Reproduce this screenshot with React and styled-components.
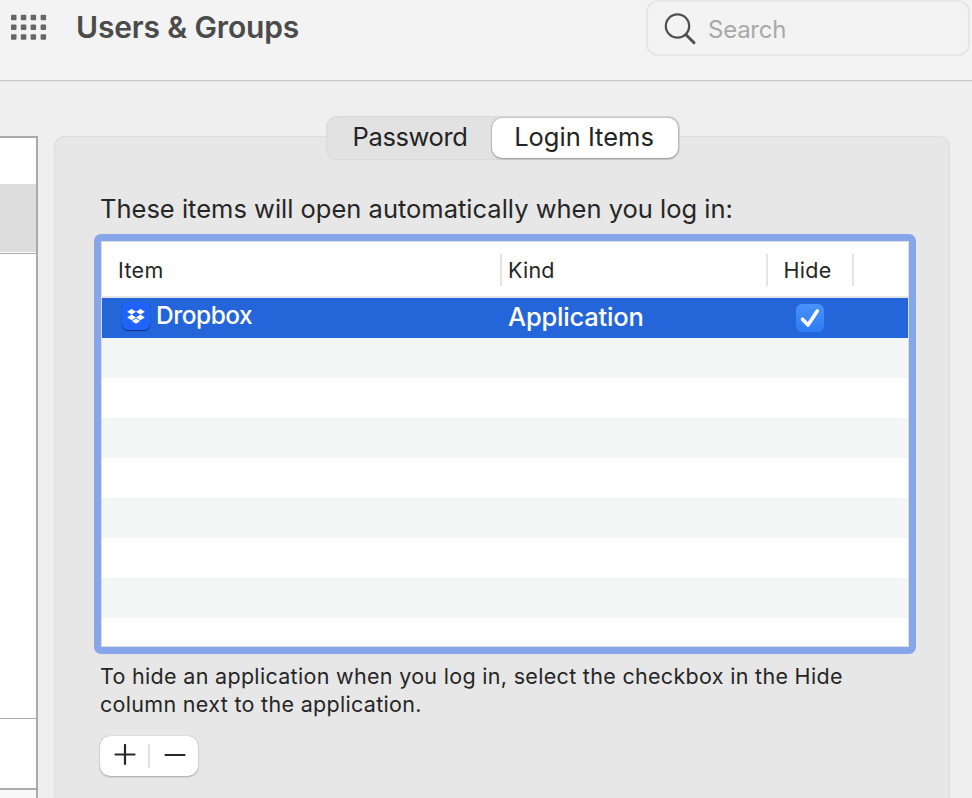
import React from "react";
import styled, { createGlobalStyle } from "styled-components";

const Global = createGlobalStyle`
  *, *::before, *::after { box-sizing: border-box; }
  body { margin: 0; overflow: hidden; background: #efefef; }
  svg { display: block; flex: none; }
`;

const Window = styled.div`
  width: 972px;
  height: 798px;
  display: flex;
  flex-direction: column;
  overflow: hidden;
  background: #efefef;
  font-family: Inter, "Liberation Sans", sans-serif;
  color: #262626;
`;

const Toolbar = styled.header`
  height: 82px;
  flex: none;
  display: flex;
  align-items: flex-start;
  padding: 0 2px 0 10px;
  background: #f3f3f3;
  border-bottom: 1px solid #e3e3e3;
  box-shadow: inset 0 -1px #c9c9c9;
`;

const Text = styled.span`
  display: block;
  white-space: nowrap;
  font-size: ${(p) => p.$size}px;
  line-height: ${(p) => p.$line}px;
  letter-spacing: ${(p) => p.$track || 0}px;
  font-weight: ${(p) => p.$weight || 400};
`;

const GridIcon = styled.svg`
  margin-top: 14px;
`;

const Title = styled.h1`
  margin: 8px auto 0 28px;
  font-size: 30px;
  line-height: 39px;
  font-weight: 600;
  letter-spacing: -0.15px;
  color: #4b4b4b;
  white-space: nowrap;
`;

const SearchField = styled.div`
  width: 324px;
  height: 56px;
  display: flex;
  align-items: center;
  gap: 11px;
  padding: 2px 0 0 16px;
  border: 2px solid #e6e6e6;
  border-radius: 12px;
  color: #a9a9a9;
`;

const SearchHint = styled.div`
  padding-top: 2px;
`;

const Content = styled.div`
  flex: 1;
  min-height: 0;
  display: flex;
  gap: 16px;
  padding-top: 54px;
`;

const Sidebar = styled.aside`
  width: 38px;
  flex: none;
  display: flex;
  flex-direction: column;
  border-top: 2px solid #ababab;
  border-right: 2px solid #ababab;
  background: #fff;
`;

const SidebarRow = styled.div`
  height: ${(p) => p.$height}px;
  flex: none;
  background: ${(p) => p.$fill || "#fff"};
  border-bottom: ${(p) => p.$rule || 0}px solid #ababab;
`;

const Panel = styled.main`
  width: 896px;
  display: flex;
  flex-direction: column;
  align-items: flex-start;
  padding: 0 33px 0 39px;
  background: #e7e7e7;
  border: 1px solid #dcdcdc;
  border-bottom: 0;
  border-radius: 11px 11px 0 0;
`;

const Tabs = styled.div`
  display: flex;
  width: 354px;
  height: 44px;
  flex: none;
  margin: -21px 0 0 232px;
  padding: 1px;
  border: 1px solid #d9d9d9;
  border-radius: 11px;
  background: #e2e2e2;
`;

const Tab = styled.button`
  width: ${(p) => p.$width}px;
  height: 40px;
  padding: 0 ${(p) => (p.$active ? 2 : 0)}px 2px 0;
  border: 0;
  border-radius: 10px;
  display: flex;
  align-items: center;
  justify-content: center;
  font-family: inherit;
  color: #242424;
  background: ${(p) => (p.$active ? "#fff" : "transparent")};
  box-shadow: ${(p) => (p.$active ? "0 0 1px 1px rgba(0,0,0,.13), 0 1px 2px rgba(0,0,0,.25)" : "none")};
`;

const Caption = styled.div`
  margin: 31px 0 7px 6px;
`;

const TableFrame = styled.div`
  width: 822px;
  height: 420px;
  flex: none;
  border: 7px solid #87a6e9;
  border-radius: 7px;
  background: #fff;
`;

const Table = styled.div`
  height: 406px;
  overflow: hidden;
  border: 1px solid #d9dde2;
  background: #fff;
`;

const Row = styled.div`
  display: grid;
  grid-template-columns: 400px 266px 86px 1fr;
  height: ${(p) => (p.$header ? 56 : 40)}px;
  border-bottom: ${(p) => (p.$header ? "2px solid #e4e6e5" : "0")};
  background: ${(p) => p.$fill || "#fff"};
  color: ${(p) => (p.$selected ? "#fff" : "inherit")};
`;

const HeaderCell = styled.div`
  height: 32px;
  margin-top: 12px;
  padding-left: ${(p) => p.$pad}px;
  border-right: ${(p) => (p.$last ? 0 : 2)}px solid #e3e3e3;
`;

const Cell = styled.div`
  display: flex;
  align-items: flex-start;
  padding: ${(p) => p.$top || 0}px 0 0 ${(p) => p.$pad || 0}px;
`;

const AppIcon = styled.div`
  width: 28px;
  height: 28px;
  margin: 4px 6px 0 0;
  display: flex;
  align-items: center;
  justify-content: center;
  border-radius: 6px;
  background: #1f63fa;
  box-shadow: 0 1px 1px rgba(0, 20, 80, 0.65);
`;

const Check = styled.div`
  width: 28px;
  height: 28px;
  border-radius: 6px;
  background: linear-gradient(#4792fa, #2f7bf6);
`;

const Help = styled.div`
  margin: 8px 0 0 6px;
`;

const ButtonPair = styled.div`
  display: flex;
  align-items: center;
  width: 98px;
  height: 40px;
  flex: none;
  margin: 18px 0 0 6px;
  border-radius: 10px;
  background: #fff;
  box-shadow: 0 0 1px rgba(0, 0, 0, 0.3), 0 1px 2px rgba(0, 0, 0, 0.25);
`;

const IconButton = styled.button`
  flex: 1;
  height: 40px;
  padding: 0 0 2px 1px;
  border: 0;
  background: none;
  display: flex;
  align-items: center;
  justify-content: center;
`;

const ButtonRule = styled.div`
  width: 2px;
  height: 24px;
  background: #e0e0e0;
`;

const stripes = ["#f4f5f5", "#fff", "#f4f5f5", "#fff", "#f4f5f5", "#fff", "#f4f5f5", "#fff"];

export default function App() {
  return (
    <>
      <Global />
      <Window>
        <Toolbar>
          <GridIcon width="38" height="28" fill="#666">
            {[1, 10.8, 20.6, 30.6].map((x) =>
              [0.8, 10.5, 20.2].map((y) => (
                <rect key={`${x}-${y}`} x={x} y={y} width="5.5" height="5.5" rx="1" />
              ))
            )}
          </GridIcon>
          <Title>Users &amp; Groups</Title>
          <SearchField>
            <svg width="33" height="33" fill="none" stroke="#505050">
              <circle cx="13.5" cy="13" r="11.7" strokeWidth="2.2" />
              <path d="M22 21.7 30 29.7" strokeWidth="3" strokeLinecap="round" />
            </svg>
            <SearchHint>
              <Text $size={24} $line={32} $track={-0.25}>Search</Text>
            </SearchHint>
          </SearchField>
        </Toolbar>
        <Content>
          <Sidebar>
            <SidebarRow $height={46} />
            <SidebarRow $height={68} $fill="#dcdcdc" />
            <SidebarRow $height={2} $rule={1} />
            <SidebarRow $height={465} $rule={1} />
            <SidebarRow $height={71} $rule={2} />
            <SidebarRow $height={8} $fill="#f8f8f8" />
          </Sidebar>
          <Panel>
            <Tabs>
              <Tab $width={164}><Text $size={25.5} $line={32} $track={-0.4}>Password</Text></Tab>
              <Tab $width={186} $active><Text $size={25.5} $line={32}>Login Items</Text></Tab>
            </Tabs>
            <Caption>
              <Text $size={25.5} $line={36}>These items will open automatically when you log in:</Text>
            </Caption>
            <TableFrame>
              <Table>
                <Row $header>
                  <HeaderCell $pad={16}><Text $size={21.5} $line={32} $track={0.35}>Item</Text></HeaderCell>
                  <HeaderCell $pad={6}><Text $size={21.5} $line={32} $track={0.2}>Kind</Text></HeaderCell>
                  <HeaderCell $pad={15.5}><Text $size={21.5} $line={32} $track={0.3}>Hide</Text></HeaderCell>
                  <HeaderCell $last />
                </Row>
                <Row $selected $fill="#2465d9">
                  <Cell $pad={20}>
                    <AppIcon>
                      <svg width="18" height="16" viewBox="0 0 18 16" fill="#fff">
                        <path d="M4.6 1 9 3.8 4.6 6.6.2 3.8ZM13.4 1l4.4 2.8-4.4 2.8L9 3.8ZM4.6 6.6 9 9.4l-4.4 2.8L.2 9.4ZM13.4 6.6l4.4 2.8-4.4 2.8L9 9.4ZM9 10.4l4.2 2.6L9 15.7 4.8 13Z" />
                      </svg>
                    </AppIcon>
                    <Text $size={24.5} $line={34} $weight={500} $track={-0.5}>Dropbox</Text>
                  </Cell>
                  <Cell $pad={6} $top={1}>
                    <Text $size={25.5} $line={36} $weight={500} $track={-0.2}>Application</Text>
                  </Cell>
                  <Cell $pad={28} $top={6}>
                    <Check>
                      <svg width="28" height="28" fill="none" stroke="#fff" strokeWidth="3.6" strokeLinecap="round" strokeLinejoin="round">
                        <path d="M6.5 15.2 12 21 21.3 7" />
                      </svg>
                    </Check>
                  </Cell>
                  <Cell />
                </Row>
                {stripes.map((fill, i) => <Row key={i} $fill={fill} />)}
              </Table>
            </TableFrame>
            <Help>
              <Text $size={21.5} $line={28} $track={0.31}>To hide an application when you log in, select the checkbox in the Hide</Text>
              <Text $size={21.5} $line={28} $track={0.31}>column next to the application.</Text>
            </Help>
            <ButtonPair>
              <IconButton aria-label="Add">
                <svg width="22" height="22" stroke="#262626" strokeWidth="2.2" strokeLinecap="round"><path d="M1.5 10.5H20.5M11 1V20" /></svg>
              </IconButton>
              <ButtonRule />
              <IconButton aria-label="Remove">
                <svg width="22" height="22" stroke="#262626" strokeWidth="2.2" strokeLinecap="round"><path d="M1.5 11H20.5" /></svg>
              </IconButton>
            </ButtonPair>
          </Panel>
        </Content>
      </Window>
    </>
  );
}
